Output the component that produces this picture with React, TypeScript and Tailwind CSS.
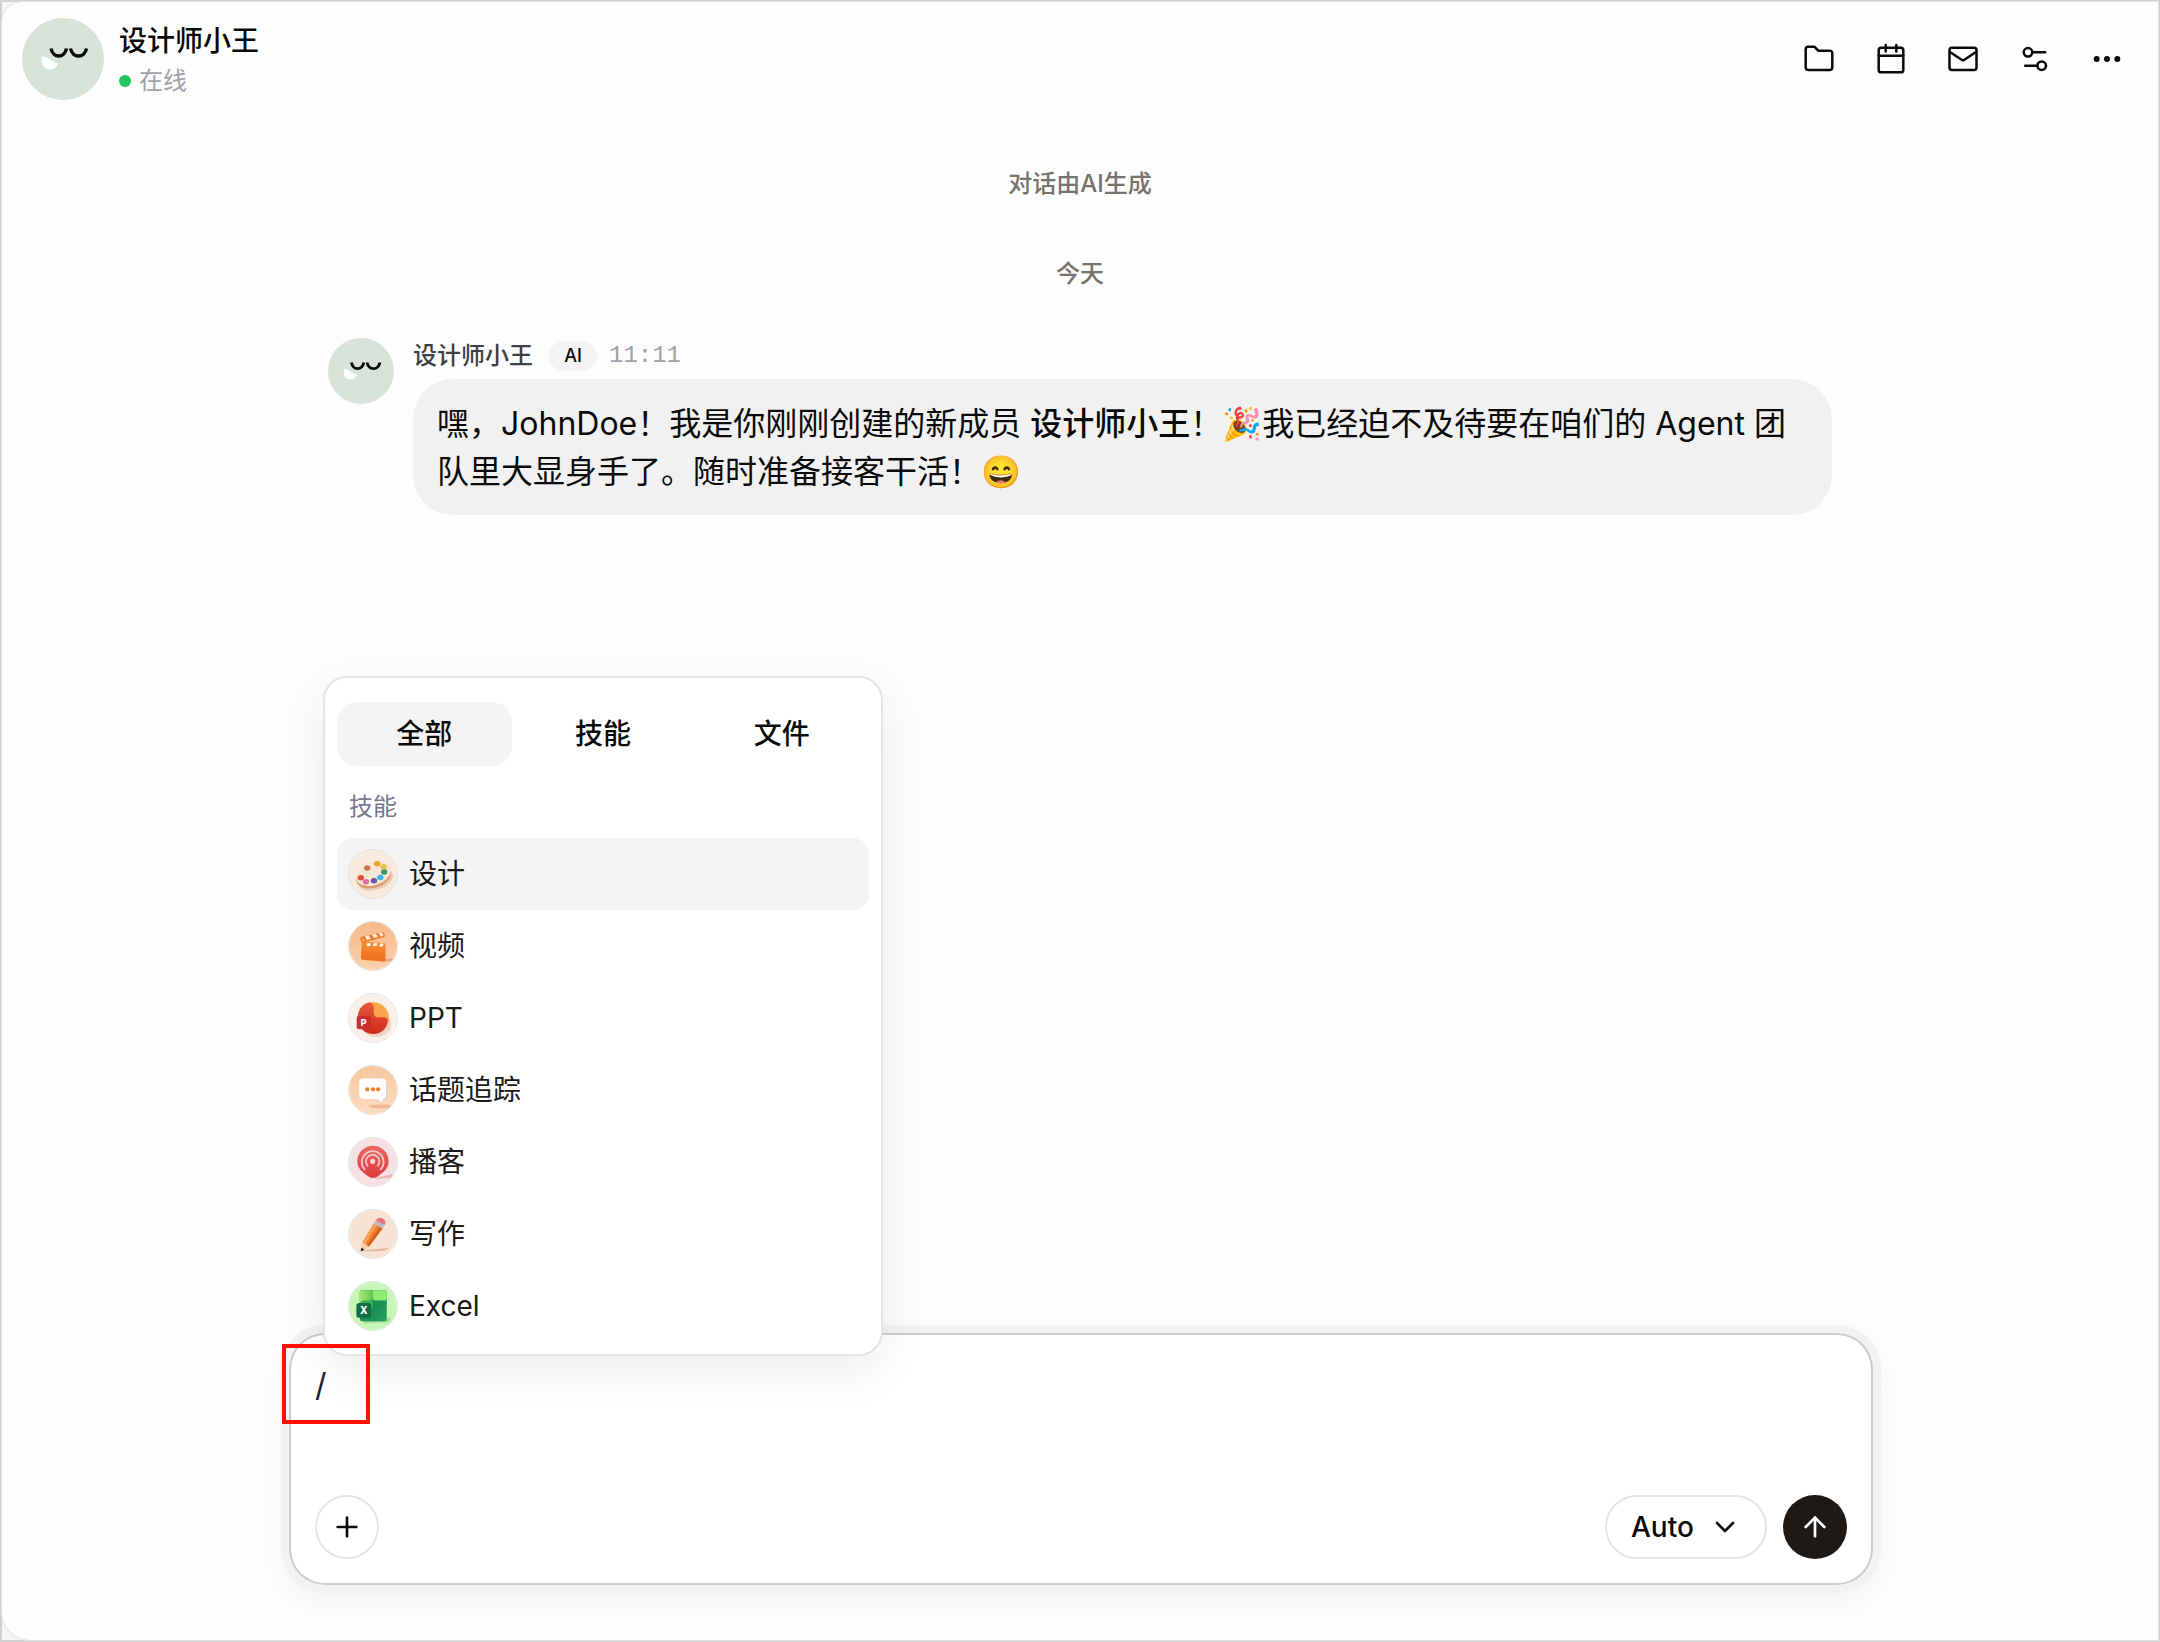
import { useState, type ReactNode } from 'react'
import { ArrowUp, ChevronDown, Plus } from 'lucide-react'
import clsx from 'clsx'

const Stroke = ({ children }: { children: ReactNode }) => (
  <svg
    viewBox="0 0 32 32"
    className="size-8"
    fill="none"
    stroke="currentColor"
    strokeWidth="2.5"
    strokeLinecap="round"
    strokeLinejoin="round"
    aria-hidden="true"
  >
    {children}
  </svg>
)

const actions = [
  {
    label: '文件',
    icon: (
      <Stroke>
        <path d="M2.7 6.2a2.4 2.4 0 0 1 2.4-2.4h5.6c.7 0 1.3.3 1.7.8l2 2.3c.4.5 1 .8 1.7.8h10.8a2.4 2.4 0 0 1 2.4 2.4v14.5a2.4 2.4 0 0 1-2.4 2.4H5.1a2.4 2.4 0 0 1-2.4-2.4z" />
      </Stroke>
    ),
  },
  {
    label: '日程',
    icon: (
      <Stroke>
        <rect x="3.7" y="4.8" width="24.6" height="24.5" rx="2.4" />
        <path d="M3.7 12.7h24.6M10.7 2v6.4M21.3 2v6.4" />
      </Stroke>
    ),
  },
  {
    label: '邮件',
    icon: (
      <Stroke>
        <rect x="2.5" y="4.8" width="27" height="22.2" rx="2.4" />
        <path d="M3 9l11.6 7.7c.9.6 1.9.6 2.8 0L29 9" />
      </Stroke>
    ),
  },
  {
    label: '设置',
    icon: (
      <Stroke>
        <circle cx="9" cy="9.3" r="4.3" />
        <path d="M13.3 9.3h12.9M6.2 22.7h12.2" />
        <circle cx="22.7" cy="22.7" r="4.3" />
      </Stroke>
    ),
  },
  {
    label: '更多',
    icon: (
      <svg viewBox="0 0 32 32" className="size-8" fill="currentColor" aria-hidden="true">
        <circle cx="5.7" cy="16" r="3" />
        <circle cx="16" cy="16" r="3" />
        <circle cx="26.3" cy="16" r="3" />
      </svg>
    ),
  },
]

const paints = [
  [57, 56, '#c9794a'],
  [88, 43, '#f0a020'],
  [108, 52, '#e6c04c'],
  [110, 69, '#3f9468'],
  [98, 86, '#38b4e6'],
  [78, 96, '#6a55b0'],
  [53, 99, '#ea6aa6'],
  [37, 87, '#e0503c'],
] as const

const PaletteArt = () => (
  <>
    <rect width="150" height="150" fill="#f8ebdd" />
    <ellipse cx="84" cy="92" rx="56" ry="32" transform="rotate(-20 84 92)" fill="#dcb89c" opacity=".6" />
    <ellipse cx="77" cy="82" rx="56" ry="36" transform="rotate(-18 77 82)" fill="#d99a6c" />
    <ellipse cx="76" cy="74" rx="56" ry="36" transform="rotate(-18 76 74)" fill="#f6e6d6" />
    {paints.map(([x, y, fill]) => (
      <ellipse key={fill} cx={x} cy={y} rx="10" ry="8.5" fill={fill} />
    ))}
  </>
)

const ClapperArt = () => (
  <>
    <defs>
      <linearGradient id="clapBg" x1="0" y1="0" x2="0" y2="1">
        <stop offset="0" stopColor="#f6b98a" />
        <stop offset="1" stopColor="#fbd0ad" />
      </linearGradient>
      <linearGradient id="clapBody" x1="0" y1="0" x2="0" y2="1">
        <stop offset="0" stopColor="#f98a35" />
        <stop offset="1" stopColor="#ee6f1c" />
      </linearGradient>
    </defs>
    <rect width="150" height="150" fill="url(#clapBg)" />
    <path d="M60 118l74-4 8 6-34 6z" fill="#dd8d58" opacity=".6" />
    <path d="M40 62l68 4q6 0 6 6v44q0 7-7 7l-63-4q-6-1-7-7z" fill="url(#clapBody)" />
    <path d="M36 50q0-3 4-4l64-14q5 0 7 5l1 6q0 4-4 5l-64 17q-7 0-8-8z" fill="#ec7a2c" />
    <path d="M50 45l12-3 6 11-12 3zM72 40l12-3 6 10-12 3zM93 35l9-2 6 9-9 3z" fill="#fff0e2" />
    <path d="M58 66l12 1-5 9-11-1zM78 66l12 1-5 9-11-1zM98 67l11 1-5 9-11-1z" fill="#fff0e2" />
    <circle cx="45" cy="57" r="5" fill="#f9a05c" />
  </>
)

const PptArt = () => (
  <>
    <defs>
      <linearGradient id="pptRed" x1="0" y1="0" x2="0" y2="1">
        <stop offset="0" stopColor="#e8563c" />
        <stop offset="1" stopColor="#cf2c1c" />
      </linearGradient>
      <linearGradient id="pptOrange" x1="1" y1="0" x2="0" y2="1">
        <stop offset="0" stopColor="#fba73c" />
        <stop offset=".5" stopColor="#f9a458" />
        <stop offset="1" stopColor="#f08a8c" />
      </linearGradient>
    </defs>
    <rect width="150" height="150" fill="#faf0ea" />
    <ellipse cx="84" cy="96" rx="48" ry="38" fill="#e9c4b8" opacity=".7" />
    <circle cx="76" cy="75" r="49" fill="url(#pptOrange)" />
    <path d="M56 28c14-5 22 4 21 18v10c0 12 6 17 16 17 12-1 28-2 28 9-2 26-20 43-45 43-28 0-49-22-49-50 0-22 12-41 29-47z" fill="url(#pptRed)" />
    <rect x="24" y="69" width="45" height="41" rx="6" fill="#c9302c" />
    <text x="46" y="99" textAnchor="middle" fontFamily="Inter, sans-serif" fontWeight="800" fontSize="28" fill="#fff">
      P
    </text>
  </>
)

const ChatArt = () => (
  <>
    <defs>
      <linearGradient id="chatBg" x1="0" y1="0" x2="0" y2="1">
        <stop offset="0" stopColor="#f7c69c" />
        <stop offset="1" stopColor="#fbdcc0" />
      </linearGradient>
    </defs>
    <rect width="150" height="150" fill="url(#chatBg)" />
    <ellipse cx="104" cy="126" rx="42" ry="6" fill="#ecab7c" opacity=".7" />
    <path d="M48 43h60q11 2 11 14v36q0 10-10 12l-3 13-14-13z" fill="#cfd0de" />
    <path d="M44 39h60q12 0 12 12v40q0 11-10 12l-1 12-15-12H45q-13 0-13-12V51q0-12 12-12z" fill="#fff" />
    <circle cx="57" cy="73" r="6.5" fill="#f07a26" />
    <circle cx="75" cy="73" r="6.5" fill="#f07a26" />
    <circle cx="91" cy="73" r="6.5" fill="#f07a26" />
  </>
)

const PodcastArt = () => (
  <>
    <defs>
      <linearGradient id="podRed" x1="0" y1="0" x2="0" y2="1">
        <stop offset="0" stopColor="#ec6660" />
        <stop offset="1" stopColor="#dc3a3e" />
      </linearGradient>
    </defs>
    <rect width="150" height="150" fill="#f5e1e3" />
    <path d="M80 126l56-14-4 12-50 4z" fill="#dd9da2" opacity=".6" />
    <path d="M75 24c28 0 49 22 49 48 0 24-18 37-32 46-8 8-24 10-33 1C44 108 26 97 26 72c0-26 21-48 49-48z" fill="url(#podRed)" />
    <g fill="none" stroke="#f3c4c6" strokeWidth="6" strokeLinecap="round">
      <path d="M49 98A34 34 0 1 1 99 98" />
      <path d="M58 87A21 21 0 1 1 90 87" />
    </g>
    <circle cx="74" cy="73" r="8" fill="#f8d7d8" />
  </>
)

const PencilArt = () => (
  <>
    <rect width="150" height="150" fill="#f6e3d3" />
    <path d="M44 126l84-8-18 10-60 1z" fill="#dfae92" opacity=".8" />
    <path d="M77 42l28 16-43 57-20-14z" fill="#ee7c2c" />
    <path d="M77 42l10 6-36 58-9-5z" fill="#f9a052" />
    <path d="M95 52l10 6-43 57-6-4z" fill="#d9601c" />
    <path d="M42 101l20 14-20 13-4-2z" fill="#f3cda8" />
    <path d="M39 117l9 7-9 5q-3-1-2-4z" fill="#2e2622" />
    <path d="M84 32l27 16-6 10-28-16z" fill="#b9bcc4" />
    <path d="M88 27q5-5 14-2 12 5 12 15l-3 8-27-16z" fill="#ec7078" />
  </>
)

const ExcelArt = () => (
  <>
    <defs>
      <linearGradient id="xlLight" x1="0" y1="0" x2="1" y2="0">
        <stop offset="0" stopColor="#a4e868" />
        <stop offset="1" stopColor="#5cc75c" />
      </linearGradient>
      <linearGradient id="xlDark" x1="0" y1="0" x2="1" y2="1">
        <stop offset="0" stopColor="#0f7a50" />
        <stop offset="1" stopColor="#25a05c" />
      </linearGradient>
    </defs>
    <rect width="150" height="150" fill="#c8f5b8" />
    <path d="M40 120l92-8-10 14-70 2z" fill="#86cf7c" opacity=".7" />
    <rect x="34" y="26" width="84" height="97" rx="7" fill="url(#xlDark)" />
    <path d="M41 26h34v42q0 22-20 22H34V33q0-7 7-7z" fill="#34b050" />
    <path d="M41 26h34v18q0 14-14 14H48q-14 0-14 14V33q0-7 7-7z" fill="url(#xlLight)" />
    <path d="M75 26h36q7 0 7 7v17q0 8-8 8H83q-8 0-8-8z" fill="#8fea74" />
    <rect x="23" y="66" width="46" height="46" rx="9" fill="#136c42" />
    <text x="46" y="100" textAnchor="middle" fontFamily="Inter, sans-serif" fontWeight="800" fontSize="31" fill="#fff">
      X
    </text>
  </>
)

const skills = [
  { name: '设计', Art: PaletteArt },
  { name: '视频', Art: ClapperArt },
  { name: 'PPT', Art: PptArt },
  { name: '话题追踪', Art: ChatArt },
  { name: '播客', Art: PodcastArt },
  { name: '写作', Art: PencilArt },
  { name: 'Excel', Art: ExcelArt },
]

const tabs = ['全部', '技能', '文件']

const Avatar = ({ className }: { className: string }) => (
  <svg viewBox="0 0 82 82" className={clsx('shrink-0', className)} role="img" aria-label="设计师小王">
    <circle cx="41" cy="41" r="40.2" fill="#d7e3d9" stroke="#dedede" strokeWidth="1.5" />
    <path d="M29 30.5c2 10 13.5 10 15.5 0M48.5 30.5c2 10 14 10 16 0" fill="none" stroke="#0a0a0a" strokeWidth="3.4" />
    <path d="M20 38.5c5-1 9 6 15.5 6.500 1.5 1-2 6.500-8 6.500-5.500 0-9-5-7.500-13z" fill="#fff" />
  </svg>
)

const SkillMenu = () => {
  const [tab, setTab] = useState('全部')
  const [active, setActive] = useState('设计')

  return (
    <div className="absolute bottom-[229px] left-[34px] w-[560px] rounded-3xl border-2 border-[#e5e5e5] bg-white px-3 pt-6 pb-3 shadow-[0_16px_48px_rgba(0,0,0,0.07)]">
      <div className="grid grid-cols-3 gap-1">
        {tabs.map((name) => (
          <button
            key={name}
            type="button"
            onClick={() => setTab(name)}
            className={clsx('h-16 rounded-[20px] text-[28px] font-medium', tab === name && 'bg-[#f4f4f4]')}
          >
            {name}
          </button>
        ))}
      </div>
      <p className="flex h-[72px] items-center px-3 pt-2.5 text-2xl text-[#77778f]">技能</p>
      <ul>
        {skills.map(({ name, Art }) => (
          <li key={name}>
            <button
              type="button"
              onClick={() => setActive(name)}
              className={clsx(
                'flex h-[72px] w-full items-center gap-[11px] rounded-2xl px-[11px] text-left text-[28px] text-[#1c1917]',
                active === name && 'bg-[#f4f4f4]'
              )}
            >
              <svg viewBox="0 0 150 150" className="size-[50px] rounded-full border border-[#e2e2e2]" aria-hidden="true">
                <Art />
              </svg>
              {name}
            </button>
          </li>
        ))}
      </ul>
    </div>
  )
}

const Composer = () => (
  <form
    onSubmit={(e) => e.preventDefault()}
    className="relative flex h-[252px] w-full max-w-[1584px] flex-col justify-between rounded-[36px] bg-white p-[26px] shadow-[inset_0_0_0_2px_#cccccc,0_0_0_8px_#f2f2f2,0_12px_32px_rgba(0,0,0,0.06)]"
  >
    <textarea
      aria-label="消息"
      defaultValue="/"
      rows={2}
      className="block h-24 w-full resize-none bg-transparent pt-0.5 text-[32px] leading-12 text-[#1e2238] outline-none"
    />
    <div className="flex items-center gap-4">
      <button
        type="button"
        aria-label="添加"
        className="mr-auto flex size-16 items-center justify-center rounded-full border-2 border-[#e5e5e5]"
      >
        <Plus className="size-8" strokeWidth={2} />
      </button>
      <div className="relative h-16 w-[162px]">
        <select
          aria-label="模型"
          defaultValue="Auto"
          className="size-full appearance-none rounded-full border-2 border-[#e5e5e5] bg-white pl-6 text-[28px] font-medium"
        >
          <option>Auto</option>
        </select>
        <ChevronDown className="pointer-events-none absolute top-4 right-[26px] size-8" strokeWidth={2} />
      </div>
      <button
        type="submit"
        aria-label="发送"
        className="flex size-16 items-center justify-center rounded-full bg-[#1c1917] text-white"
      >
        <ArrowUp className="size-8" strokeWidth={2} />
      </button>
    </div>
    <SkillMenu />
    {/* highlight around the slash command */}
    <div className="pointer-events-none absolute top-[11px] -left-[7px] h-20 w-[88px] border-4 border-[#ff1000]" />
  </form>
)

export default function App() {
  return (
    <div className="flex min-h-screen border-2 border-[#d1d1d1] bg-[#f6f6f5] font-[Inter,'Noto_Sans_CJK_SC',sans-serif] text-[#0a0a0a]">
      <div className="flex w-full flex-col rounded-tl-[20px] rounded-bl-[28px] bg-[#fdfdfd] shadow-[0_0_0_1px_#e2e2e2]">
        <header className="flex items-center justify-between pt-4 pr-[31px] pl-5">
          <div className="flex items-center gap-[15px]">
            <Avatar className="size-[82px]" />
            <div className="pt-1">
              <h1 className="text-[28px] leading-[39px] font-medium">设计师小王</h1>
              <p className="flex items-center gap-2 text-2xl leading-[39px] text-[#a1a1aa]">
                <span className="size-3 rounded-full bg-[#22c55e]" />
                在线
              </p>
            </div>
          </div>
          <nav className="flex gap-8">
            {actions.map(({ label, icon }) => (
              <button key={label} type="button" aria-label={label} className="flex size-10 items-center justify-center">
                {icon}
              </button>
            ))}
          </nav>
        </header>

        <main className="mx-auto flex w-full max-w-[1504px] flex-1 flex-col pt-[68px]">
          <p className="text-center text-2xl font-medium text-[#78716c]">对话由AI生成</p>
          <p className="mt-[58px] text-center text-2xl font-medium text-[#78716c]">今天</p>
          <article className="mt-12 flex gap-[19px]">
            <Avatar className="size-[66px]" />
            <div className="flex-1">
              <div className="flex h-9 items-center text-2xl">
                <span className="font-medium text-[#3f3f46]">设计师小王</span>
                <span className="ml-4 flex h-[30px] w-12 items-center justify-center rounded-full bg-[#f4f4f4] text-lg font-medium">
                  AI
                </span>
                <time className="ml-3 font-['Liberation_Mono',monospace] text-[#a1a1aa]">11:11</time>
              </div>
              <p className="mt-[5px] rounded-[40px] bg-[#f1f1f1] px-6 pt-[21px] pb-[19px] text-[32px] leading-12">
                嘿，JohnDoe！我是你刚刚创建的新成员 <strong className="font-medium">设计师小王</strong>
                ！🎉我已经迫不及待要在咱们的 Agent 团队里大显身手了。随时准备接客干活！😄
              </p>
            </div>
          </article>
        </main>

        <footer className="flex justify-center pb-[55px] pl-0.5">
          <Composer />
        </footer>
      </div>
    </div>
  )
}
